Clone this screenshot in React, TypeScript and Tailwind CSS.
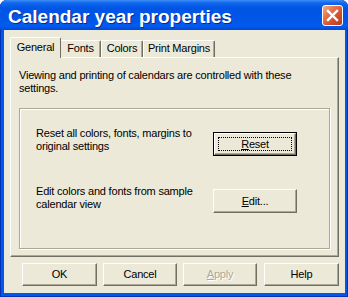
import React from "react";

const FONT = { fontFamily: '"Liberation Sans", Arial, sans-serif' };

function Btn({
  w,
  h,
  children,
  def,
  disabled,
  className = "",
}: {
  w: string;
  h: string;
  children: React.ReactNode;
  def?: boolean;
  disabled?: boolean;
  className?: string;
}) {
  if (def) {
    return (
      <div className={`${w} ${h} flex-none border border-black bg-[#ECE9D8] ${className}`}>
        <div className="relative h-full w-full border border-t-white border-l-white border-r-[#716F64] border-b-[#716F64] shadow-[inset_-1px_-1px_0_#ACA899] flex items-center justify-center">
          <div className="absolute left-[3px] top-[3px] right-[3px] bottom-[3px] border border-dotted border-black" />
          <span className="relative text-black">{children}</span>
        </div>
      </div>
    );
  }
  return (
    <div
      className={`${w} ${h} flex-none bg-[#ECE9D8] border border-t-white border-l-white border-r-[#716F64] border-b-[#716F64] shadow-[inset_-1px_-1px_0_#ACA899] flex items-center justify-center ${className}`}
    >
      <span
        className={
          disabled
            ? "text-[#ACA899] [text-shadow:1px_1px_0_#ffffff]"
            : "text-black"
        }
      >
        {children}
      </span>
    </div>
  );
}

export default function App() {
  return (
    <div
      className="w-[348px] h-[297px] bg-white overflow-hidden text-[11px] leading-[13px] tracking-[-0.2px] text-black"
      style={FONT}
    >
      <div className="w-full h-full flex flex-col rounded-t-[7px] overflow-hidden bg-[#0058EA] shadow-[inset_1px_0_0_#0033B8,inset_-1px_0_0_#0033B8,inset_0_-1px_0_#0033B8]">
        {/* Title bar */}
        <div className="h-[30px] flex-none flex items-start justify-between bg-[linear-gradient(to_bottom,#3D8FF5_0px,#1167EE_3px,#0055E5_8px,#0056E8_20px,#005CF0_26px,#0048D4_30px)]">
          <div className="pl-[8px] pt-[7px] text-[19px] leading-[19px] font-bold tracking-[0px] text-white [text-shadow:1px_1px_0_#0A2A8C]">
            Calendar year properties
          </div>
          <div className="mt-[5px] mr-[5px] w-[21px] h-[21px] rounded-[3px] border border-white bg-[linear-gradient(135deg,#F2AE8E_0%,#E5744C_35%,#D2502C_65%,#B8391C_100%)] flex items-center justify-center">
            <svg width="19" height="19" viewBox="0 0 19 19">
              <path
                d="M5 5 L14 14 M14 5 L5 14"
                stroke="#ffffff"
                strokeWidth="2.4"
                strokeLinecap="square"
              />
            </svg>
          </div>
        </div>

        {/* Body */}
        <div className="flex-1 ml-[4px] mr-[3px] mb-[4px] bg-[#ECE9D8] flex flex-col pt-[7px] pl-[6px] pr-[6px]">
          {/* Tabs */}
          <div className="relative z-10 h-[21px] flex items-end flex-none">
            <div className="w-[51px] h-[21px] bg-[#ECE9D8] border-l border-t border-white border-r border-r-[#716F64] rounded-tl-[2px] rounded-tr-[2px] pt-[3px] text-center">
              General
            </div>
            <div className="w-[40px] h-[17px] mb-[1px] border-t border-white border-r border-r-[#716F64] shadow-[inset_-1px_0_0_#ACA899] rounded-tr-[2px] pt-[1px] text-center">
              Fonts
            </div>
            <div className="w-[42px] h-[17px] mb-[1px] border-l border-t border-white border-r border-r-[#716F64] shadow-[inset_-1px_0_0_#ACA899] rounded-tr-[2px] pt-[1px] text-center">
              Colors
            </div>
            <div className="w-[72px] h-[17px] mb-[1px] border-l border-t border-white border-r border-r-[#716F64] shadow-[inset_-1px_0_0_#ACA899] rounded-tr-[2px] pt-[1px] text-center">
              Print Margins
            </div>
          </div>

          {/* Panel */}
          <div className="-mt-[1px] h-[200px] flex-none border border-t-white border-l-white border-r-[#716F64] border-b-[#716F64] shadow-[inset_-1px_-1px_0_#ACA899] pt-[11px] px-[8px]">
            <div>
              Viewing and printing of calendars are controlled with these
              <br />
              settings.
            </div>
            <div className="mt-[13px] h-[141px] border border-[#ACA899] shadow-[inset_1px_1px_0_#ffffff,1px_1px_0_#ffffff] pt-[18px] pl-[16px]">
              <div className="flex items-start">
                <div className="w-[177px] flex-none">
                  Reset all colors, fonts, margins to
                  <br />
                  original settings
                </div>
                <Btn w="w-[84px]" h="h-[24px]" def className="mt-[5px]">
                  <u className="underline-offset-[1px]">R</u>eset
                </Btn>
              </div>
              <div className="flex items-start mt-[29px]">
                <div className="w-[177px] flex-none">
                  Edit colors and fonts from sample
                  <br />
                  calendar view
                </div>
                <Btn w="w-[84px]" h="h-[24px]" className="mt-[4px]">
                  <u className="underline-offset-[1px]">E</u>dit...
                </Btn>
              </div>
            </div>
          </div>

          {/* Bottom buttons */}
          <div className="mt-[6px] flex items-start pl-[12px]">
            <Btn w="w-[75px]" h="h-[23px]">OK</Btn>
            <Btn w="w-[74px]" h="h-[23px]" className="ml-[6px]">Cancel</Btn>
            <Btn w="w-[74px]" h="h-[23px]" className="ml-[6px]" disabled>
              <u className="underline-offset-[1px]">A</u>pply
            </Btn>
            <Btn w="w-[75px]" h="h-[23px]" className="ml-[7px]">Help</Btn>
          </div>
        </div>
      </div>
    </div>
  );
}
